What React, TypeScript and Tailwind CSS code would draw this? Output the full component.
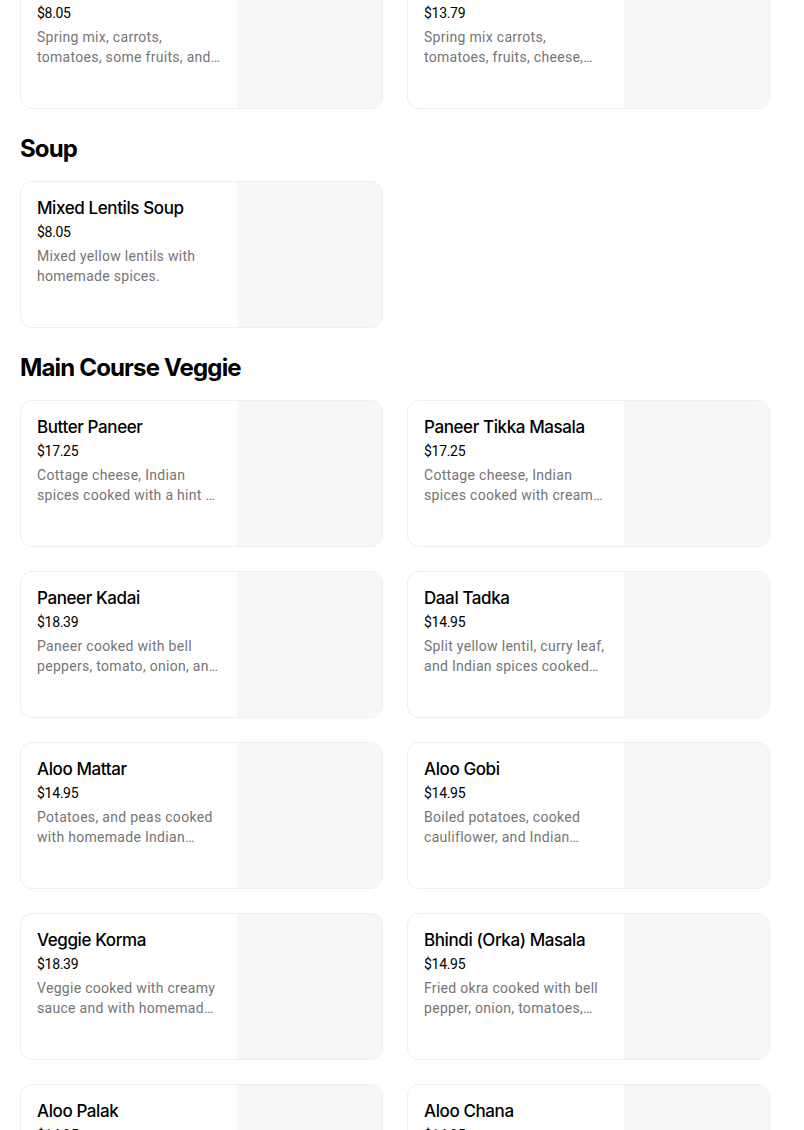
import React from "react";

type Item = { name: string; price: string; desc: string };

const salads: Item[] = [
  { name: "Garden Salad", price: "$8.05", desc: "Spring mix, carrots, tomatoes, some fruits, and house dressing." },
  { name: "Paneer Salad", price: "$13.79", desc: "Spring mix carrots, tomatoes, fruits, cheese, and paneer." },
];

const soups: Item[] = [
  { name: "Mixed Lentils Soup", price: "$8.05", desc: "Mixed yellow lentils with homemade spices." },
];

const mains: Item[] = [
  { name: "Butter Paneer", price: "$17.25", desc: "Cottage cheese, Indian spices cooked with a hint of butter and cream." },
  { name: "Paneer Tikka Masala", price: "$17.25", desc: "Cottage cheese, Indian spices cooked with creamy tomato sauce." },
  { name: "Paneer Kadai", price: "$18.39", desc: "Paneer cooked with bell peppers, tomato, onion, and spices." },
  { name: "Daal Tadka", price: "$14.95", desc: "Split yellow lentil, curry leaf, and Indian spices cooked together." },
  { name: "Aloo Mattar", price: "$14.95", desc: "Potatoes, and peas cooked with homemade Indian spices." },
  { name: "Aloo Gobi", price: "$14.95", desc: "Boiled potatoes, cooked cauliflower, and Indian spices." },
  { name: "Veggie Korma", price: "$18.39", desc: "Veggie cooked with creamy sauce and with homemade spices." },
  { name: "Bhindi (Orka) Masala", price: "$14.95", desc: "Fried okra cooked with bell pepper, onion, tomatoes, and spices." },
  { name: "Aloo Palak", price: "$14.95", desc: "Potatoes cooked with spinach and homemade spices." },
  { name: "Aloo Chana", price: "$14.95", desc: "Potatoes and chickpeas cooked with Indian spices." },
];

function Card({ item }: { item: Item }) {
  return (
    <div className="flex h-[147px] overflow-hidden rounded-xl border border-[#eeeeee] bg-white">
      <div className="flex-1 min-w-0 pl-4 pr-4 pt-4">
        <div
          className="text-[17px] leading-5 font-medium text-black truncate tracking-[-0.4px]"
          style={{ fontFamily: "Inter, 'Liberation Sans', sans-serif" }}
        >
          {item.name}
        </div>
        <div className="mt-1 text-[14px] leading-5 text-black tracking-[-0.3px]">{item.price}</div>
        <div className="mt-1 text-[14px] leading-5 text-[#757575] line-clamp-2 tracking-[0.3px]">{item.desc}</div>
      </div>
      <div className="w-[145px] shrink-0 bg-[#f7f7f7]" />
    </div>
  );
}

function Grid({ items }: { items: Item[] }) {
  return (
    <div className="grid grid-cols-2 gap-6">
      {items.map((it) => (
        <Card key={it.name} item={it} />
      ))}
    </div>
  );
}

function Heading({ children }: { children: React.ReactNode }) {
  return (
    <h2
      className="mt-6 mb-4 h-8 text-[24px] leading-8 font-bold text-black tracking-[-0.035em]"
      style={{ fontFamily: "Inter, 'Liberation Sans', sans-serif" }}
    >
      {children}
    </h2>
  );
}

export default function App() {
  return (
    <div className="h-[1130px] overflow-hidden bg-white" style={{ fontFamily: "Roboto, 'Liberation Sans', sans-serif" }}>
      <div className="w-[790px] px-5 mt-[-38px]">
        <Grid items={salads} />
        <Heading>Soup</Heading>
        <Grid items={soups} />
        <Heading>Main Course Veggie</Heading>
        <Grid items={mains} />
      </div>
    </div>
  );
}
